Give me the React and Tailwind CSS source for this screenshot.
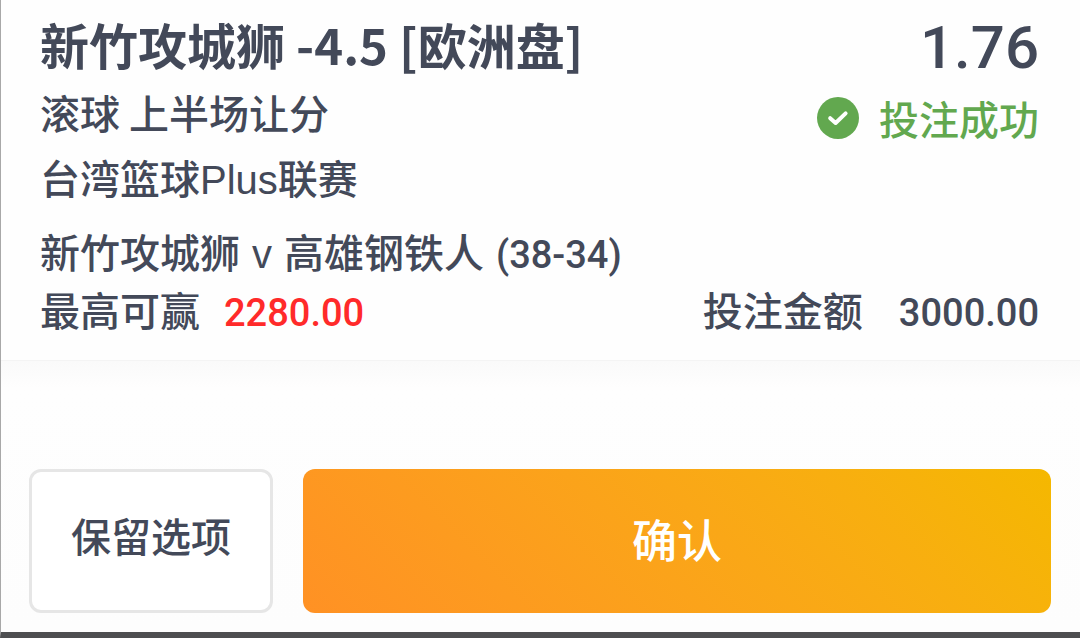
const CJK = "font-['Noto_Sans_CJK_SC',sans-serif]";

function BetCard() {
  return (
    <section className="border-b border-[#f4f4f4] pt-3 pr-[41px] pb-5 pl-[39px]">
      <div className="flex justify-between">
        <div className="flex flex-col gap-1">
          <h1 className="text-[49px] leading-[64px] font-bold whitespace-nowrap">
            新竹攻城狮 -4.5 [欧洲盘]
          </h1>
          <p className="text-[40px] leading-[64px] whitespace-nowrap">滚球 上半场让分</p>
          <p className="font-['Liberation_Sans','Noto_Sans_CJK_SC',sans-serif] text-[40px] leading-[64px] whitespace-nowrap">
            台湾篮球Plus联赛
          </p>
        </div>
        <div className="flex flex-col items-end">
          <p className="font-['Roboto',sans-serif] text-[60px] leading-[72px]">1.76</p>
          <p className="mt-0.5 flex items-center gap-5 text-[40px] leading-[64px] text-[#62a84f]">
            <svg className="size-[42px]" viewBox="0 0 42 42" aria-hidden="true">
              <circle cx="21" cy="21" r="21" fill="currentColor" />
              <path
                d="M13.2 21.2 L18.6 26 L28.6 16.4"
                fill="none"
                stroke="#fff"
                strokeWidth="4"
                strokeLinecap="round"
                strokeLinejoin="round"
              />
            </svg>
            投注成功
          </p>
        </div>
      </div>
      <p className="mt-3 flex items-baseline gap-3 text-[40px] leading-[54px] whitespace-nowrap">
        <span>新竹攻城狮</span>
        <span className="font-['Liberation_Sans',sans-serif]">v</span>
        <span>高雄钢铁人</span>
        <span className="font-['Roboto',sans-serif] text-[38px]">(38-34)</span>
      </p>
      <dl className="flex justify-between text-[40px] leading-[54px]">
        <div className="flex items-baseline gap-6">
          <dt>最高可赢</dt>
          <dd className="font-['Roboto',sans-serif] text-[38px] text-[#ff2a2a]">2280.00</dd>
        </div>
        <div className="flex items-baseline gap-9">
          <dt>投注金额</dt>
          <dd className="font-['Roboto',sans-serif] text-[38px]">3000.00</dd>
        </div>
      </dl>
    </section>
  );
}

function Actions() {
  return (
    <footer className="flex gap-[30px] bg-linear-to-b from-[#fafafa] via-[#fefefe] via-10% to-[#fdfdfd] pt-[108px] pr-[29px] pb-[18px] pl-7">
      <button
        type="button"
        className="h-36 w-[244px] shrink-0 rounded-xl border-3 border-[#e6e6e6] bg-white pb-3 text-[40px]"
      >
        保留选项
      </button>
      <button
        type="button"
        className="h-36 flex-1 rounded-xl bg-linear-45 from-[#ff9124] to-[#f5b800] pb-1 text-[45px] text-white"
      >
        确认
      </button>
    </footer>
  );
}

export default function App() {
  return (
    <main
      lang="zh-CN"
      className={`${CJK} flex min-h-screen flex-col border-b-6 border-l border-b-[#4d4e50] border-l-[#a8a8a8] bg-[#fefefe] font-medium text-[#434959]`}
    >
      <BetCard />
      <Actions />
    </main>
  );
}
